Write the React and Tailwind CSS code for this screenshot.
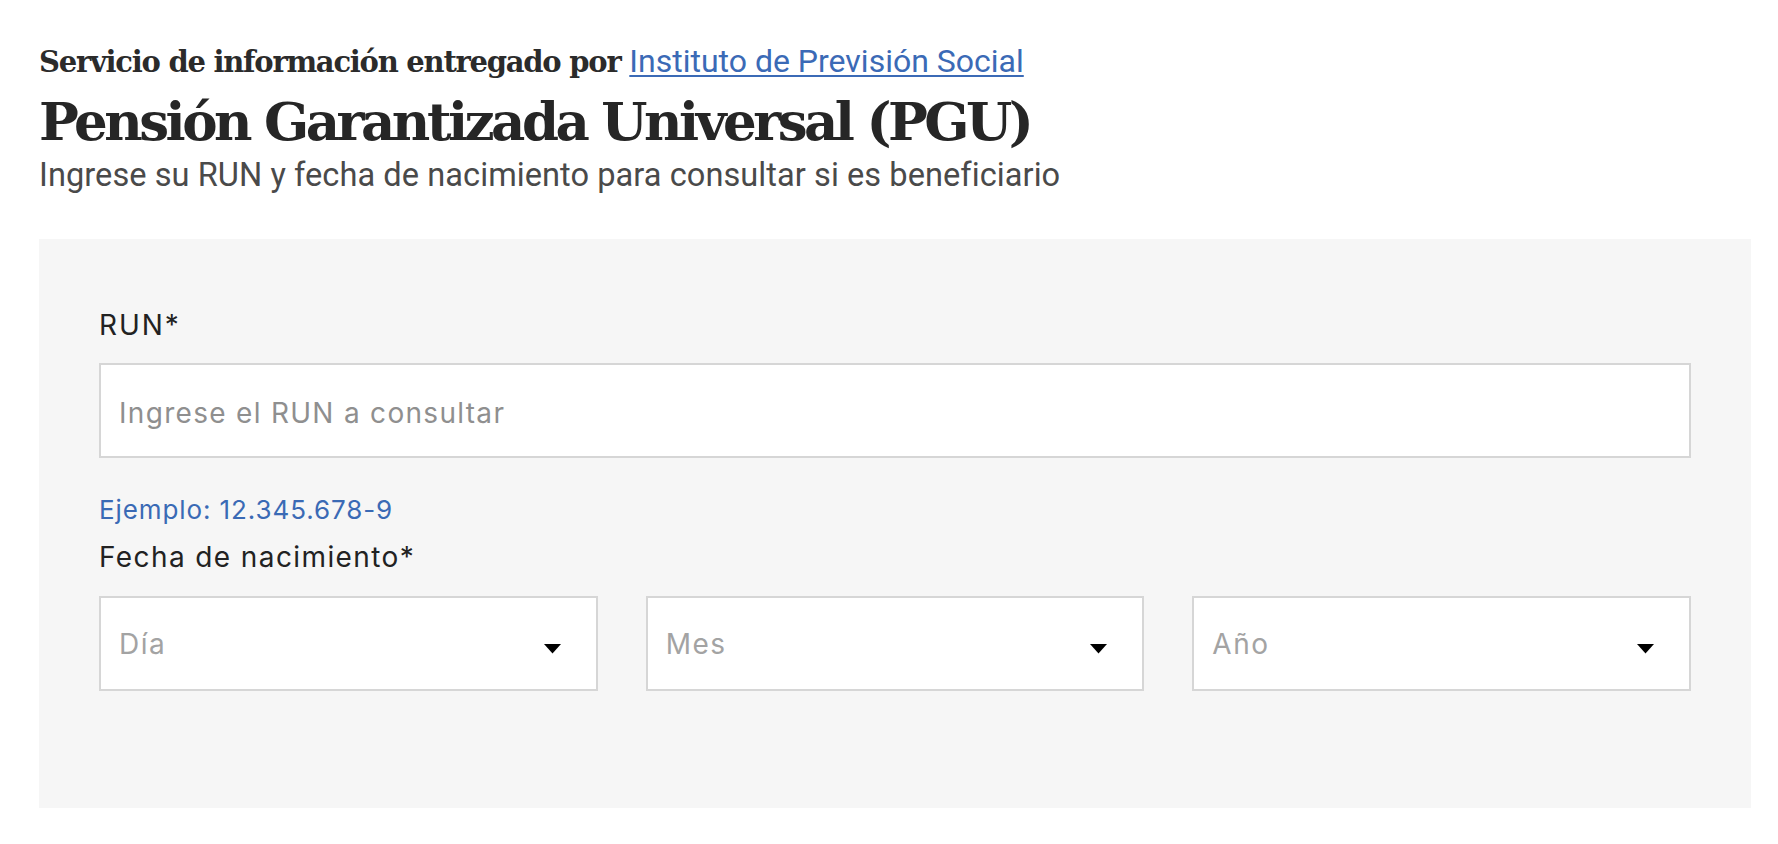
import React from "react";

const slab = { fontFamily: '"DejaVu Serif", "Liberation Serif", serif' };

function Caret() {
  return (
    <svg width="17" height="10" viewBox="0 0 17 10" className="mt-[10px] shrink-0" aria-hidden="true">
      <polygon points="0,0 17,0 8.5,9.5" fill="#000" />
    </svg>
  );
}

function FakeSelect({ label }) {
  return (
    <div className="h-[95px] bg-white border-2 border-[#d6d6d6] pl-[18px] pr-[35px] flex items-center justify-between cursor-pointer">
      <span className="text-[28px] leading-[34px] tracking-[1.5px] text-[#a3a3a3] font-['Inter',sans-serif] mt-[1px]">{label}</span>
      <Caret />
    </div>
  );
}

export default function App() {
  return (
    <div className="min-h-[844px] bg-white pl-[39px] pr-[27px] pt-[41px] font-['Roboto',sans-serif]">
      <div className="text-[29px] leading-[40px] text-[#2b2b2b] font-bold tracking-[-1.25px]" style={slab}>
        Servicio de información entregado por{" "}
        <a
          href="#"
          className="font-normal tracking-normal text-[32px] leading-[40px] text-[#3b6ab6] underline decoration-2 underline-offset-[3px] font-['Roboto',sans-serif]"
        >
          Instituto de Previsión Social
        </a>
      </div>
      <h1
        className="mt-[9px] text-[53px] leading-[60px] font-bold text-[#262626] tracking-[-3.5px]"
        style={slab}
      >
        Pensión Garantizada Universal (PGU)
      </h1>
      <p className="mt-[4px] text-[32.6px] leading-[40px] tracking-[0.05px] text-[#4a4a4a]">
        Ingrese su RUN y fecha de nacimiento para consultar si es beneficiario
      </p>

      <div className="mt-[44px] bg-[#f6f6f6] pl-[60px] pr-[60px] pt-[69px] pb-[117px] font-['Inter',sans-serif]">
        <label className="block text-[28px] leading-[34px] tracking-[1.9px] text-[#222222]">RUN*</label>
        <input
          type="text"
          placeholder="Ingrese el RUN a consultar"
          className="mt-[21px] block w-full h-[95px] bg-white border-2 border-[#d6d6d6] pl-[18px] pt-[4px] text-[28px] tracking-[1.3px] text-[#222] placeholder:text-[#8f8f8f] outline-none font-['Inter',sans-serif]"
        />
        <div className="mt-[36px] text-[26px] leading-[32px] tracking-[0.9px] text-[#3a6ab5]">Ejemplo: 12.345.678-9</div>
        <div className="mt-[14px] text-[28px] leading-[34px] tracking-[1.4px] text-[#222222]">Fecha de nacimiento*</div>
        <div className="mt-[22px] grid grid-cols-3 gap-[48px]">
          <FakeSelect label="Día" />
          <FakeSelect label="Mes" />
          <FakeSelect label="Año" />
        </div>
      </div>
    </div>
  );
}
